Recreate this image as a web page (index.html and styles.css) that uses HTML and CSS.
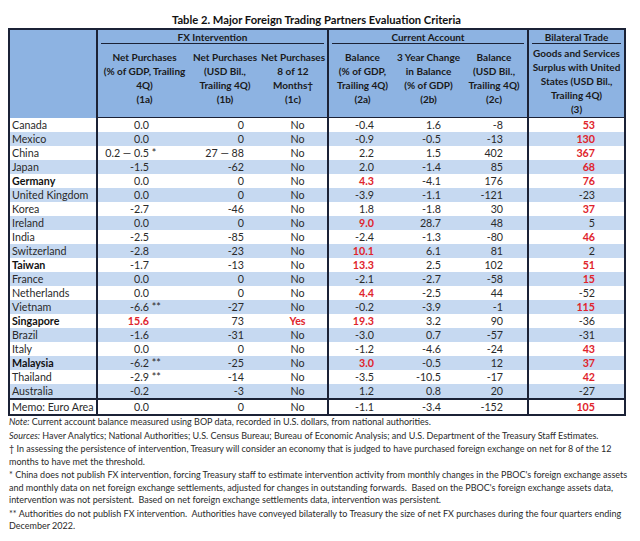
FILE: index.html
```html
<!DOCTYPE html>
<html lang="en">
<head>
<meta charset="utf-8">
<title>Table 2</title>
<link rel="stylesheet" href="styles.css">
</head>
<body>
<div class="page">
  <h1 class="title">Table 2. Major Foreign Trading Partners Evaluation Criteria</h1>
  <table class="crit">
    <colgroup>
      <col class="w0"><col class="w1a"><col class="w1b"><col class="w1c"><col class="w2a"><col class="w2b"><col class="w2c"><col class="w3">
    </colgroup>
    <thead>
      <tr class="grp">
        <th rowspan="2" class="sep"></th>
        <th colspan="3" class="sep"><div class="gl">FX Intervention</div></th>
        <th colspan="3" class="sep"><div class="gl">Current Account</div></th>
        <th><div class="gl">Bilateral Trade</div></th>
      </tr>
      <tr class="sub">
        <th>Net Purchases<br>(% of GDP, Trailing<br>4Q)<br>(1a)</th>
        <th>Net Purchases<br>(USD Bil.,<br>Trailing 4Q)<br>(1b)</th>
        <th class="sep">Net Purchases<br>8 of 12<br>Months†<br>(1c)</th>
        <th>Balance<br>(% of GDP,<br>Trailing 4Q)<br>(2a)</th>
        <th>3 Year Change<br>in Balance<br>(% of GDP)<br>(2b)</th>
        <th class="sep">Balance<br>(USD Bil.,<br>Trailing 4Q)<br>(2c)</th>
        <th class="tall">Goods and Services<br>Surplus with United<br>States (USD Bil.,<br>Trailing 4Q)<br>(3)</th>
      </tr>
    </thead>
    <tbody>
      <tr><td class="n">Canada</td><td class="a">0.0</td><td class="b">0</td><td class="c">No</td><td class="d">-0.4</td><td class="e">1.6</td><td class="f">-8</td><td class="g r">53</td></tr>
      <tr><td class="n">Mexico</td><td class="a">0.0</td><td class="b">0</td><td class="c">No</td><td class="d">-0.9</td><td class="e">-0.5</td><td class="f">-13</td><td class="g r">130</td></tr>
      <tr><td class="n">China</td><td class="a">0.2 — 0.5<span class="fn">&nbsp;*</span></td><td class="b">27 — 88</td><td class="c">No</td><td class="d">2.2</td><td class="e">1.5</td><td class="f">402</td><td class="g r">367</td></tr>
      <tr><td class="n">Japan</td><td class="a">-1.5</td><td class="b">-62</td><td class="c">No</td><td class="d">2.0</td><td class="e">-1.4</td><td class="f">85</td><td class="g r">68</td></tr>
      <tr><td class="n bold">Germany</td><td class="a">0.0</td><td class="b">0</td><td class="c">No</td><td class="d r">4.3</td><td class="e">-4.1</td><td class="f">176</td><td class="g r">76</td></tr>
      <tr><td class="n">United Kingdom</td><td class="a">0.0</td><td class="b">0</td><td class="c">No</td><td class="d">-3.9</td><td class="e">-1.1</td><td class="f">-121</td><td class="g">-23</td></tr>
      <tr><td class="n">Korea</td><td class="a">-2.7</td><td class="b">-46</td><td class="c">No</td><td class="d">1.8</td><td class="e">-1.8</td><td class="f">30</td><td class="g r">37</td></tr>
      <tr><td class="n">Ireland</td><td class="a">0.0</td><td class="b">0</td><td class="c">No</td><td class="d r">9.0</td><td class="e">28.7</td><td class="f">48</td><td class="g">5</td></tr>
      <tr><td class="n">India</td><td class="a">-2.5</td><td class="b">-85</td><td class="c">No</td><td class="d">-2.4</td><td class="e">-1.3</td><td class="f">-80</td><td class="g r">46</td></tr>
      <tr><td class="n">Switzerland</td><td class="a">-2.8</td><td class="b">-23</td><td class="c">No</td><td class="d r">10.1</td><td class="e">6.1</td><td class="f">81</td><td class="g">2</td></tr>
      <tr><td class="n bold">Taiwan</td><td class="a">-1.7</td><td class="b">-13</td><td class="c">No</td><td class="d r">13.3</td><td class="e">2.5</td><td class="f">102</td><td class="g r">51</td></tr>
      <tr><td class="n">France</td><td class="a">0.0</td><td class="b">0</td><td class="c">No</td><td class="d">-2.1</td><td class="e">-2.7</td><td class="f">-58</td><td class="g r">15</td></tr>
      <tr><td class="n">Netherlands</td><td class="a">0.0</td><td class="b">0</td><td class="c">No</td><td class="d r">4.4</td><td class="e">-2.5</td><td class="f">44</td><td class="g">-52</td></tr>
      <tr><td class="n">Vietnam</td><td class="a">-6.6<span class="fn">&nbsp;**</span></td><td class="b">-27</td><td class="c">No</td><td class="d">-0.2</td><td class="e">-3.9</td><td class="f">-1</td><td class="g r">115</td></tr>
      <tr><td class="n bold">Singapore</td><td class="a r">15.6</td><td class="b">73</td><td class="c r">Yes</td><td class="d r">19.3</td><td class="e">3.2</td><td class="f">90</td><td class="g">-36</td></tr>
      <tr><td class="n">Brazil</td><td class="a">-1.6</td><td class="b">-31</td><td class="c">No</td><td class="d">-3.0</td><td class="e">0.7</td><td class="f">-57</td><td class="g">-31</td></tr>
      <tr><td class="n">Italy</td><td class="a">0.0</td><td class="b">0</td><td class="c">No</td><td class="d">-1.2</td><td class="e">-4.6</td><td class="f">-24</td><td class="g r">43</td></tr>
      <tr><td class="n bold">Malaysia</td><td class="a">-6.2<span class="fn">&nbsp;**</span></td><td class="b">-25</td><td class="c">No</td><td class="d r">3.0</td><td class="e">-0.5</td><td class="f">12</td><td class="g r">37</td></tr>
      <tr><td class="n">Thailand</td><td class="a">-2.9<span class="fn">&nbsp;**</span></td><td class="b">-14</td><td class="c">No</td><td class="d">-3.5</td><td class="e">-10.5</td><td class="f">-17</td><td class="g r">42</td></tr>
      <tr><td class="n">Australia</td><td class="a">-0.2</td><td class="b">-3</td><td class="c">No</td><td class="d">1.2</td><td class="e">0.8</td><td class="f">20</td><td class="g">-27</td></tr>
      <tr class="memo"><td class="n">Memo: Euro Area</td><td class="a">0.0</td><td class="b">0</td><td class="c">No</td><td class="d">-1.1</td><td class="e">-3.4</td><td class="f">-152</td><td class="g r">105</td></tr>
    </tbody>
  </table>
  <div class="notes">
    <p><i>Note:</i> Current account balance measured using BOP data, recorded in U.S. dollars, from national authorities.</p>
    <p><i>Sources:</i> Haver Analytics; National Authorities; U.S. Census Bureau; Bureau of Economic Analysis; and U.S. Department of the Treasury Staff Estimates.</p>
    <p>† In assessing the persistence of intervention, Treasury will consider an economy that is judged to have purchased foreign exchange on net for 8 of the 12<br>months to have met the threshold.</p>
    <p>* China does not publish FX intervention, forcing Treasury staff to estimate intervention activity from monthly changes in the PBOC's foreign exchange assets<br>and monthly data on net foreign exchange settlements, adjusted for changes in outstanding forwards.&nbsp; Based on the PBOC's foreign exchange assets data,<br>intervention was not persistent.&nbsp; Based on net foreign exchange settlements data, intervention was persistent.</p>
    <p>** Authorities do not publish FX intervention.&nbsp; Authorities have conveyed bilaterally to Treasury the size of net FX purchases during the four quarters ending<br>December 2022.</p>
  </div>
</div>
</body>
</html>
```

FILE: styles.css
```css
html, body {
  margin: 0;
  padding: 0;
  background: #ffffff;
}
body {
  font-family: Lato, "Open Sans", "Liberation Sans", sans-serif;
  color: #222222;
}
.page {
  width: 640px;
  padding: 12px 0 0 8px;
  box-sizing: border-box;
}
.title {
  margin: 0;
  width: 617px;
  text-align: center;
  font-size: 11.2px;
  line-height: 15px;
  font-weight: 700;
  color: #111111;
}
.crit {
  margin-top: 1px;
  width: 617px;
  table-layout: fixed;
  border-collapse: collapse;
  border: 2px solid #1b2236;
  font-size: 10.7px;
}
.w0 { width: 88px; }
.w1a { width: 94px; }
.w1b { width: 68px; }
.w1c { width: 69px; }
.w2a { width: 68px; }
.w2b { width: 65px; }
.w2c { width: 67px; }
.w3 { width: 97px; }

.crit th {
  background: #8db3e2;
  font-weight: 700;
  color: #1a1a1a;
  padding: 0;
  text-align: center;
  white-space: nowrap;
}
.grp th {
  height: 14px;
  vertical-align: top;
  font-size: 10px;
}
.gl {
  margin: 0 3px;
  line-height: 12px;
  padding-top: 1px;
  border-bottom: 1.5px solid #1b2236;
}
.sub th {
  font-size: 10px;
  line-height: 14px;
  vertical-align: top;
  padding: 6px 0 1px;
  border-bottom: 1.5px solid #1b2236;
}
.sub th.tall {
  padding-top: 2px;
}
.crit .sep {
  border-right: 2px solid #1b2236;
}
.crit td {
  padding: 0;
  height: 14px;
  line-height: 14px;
  white-space: nowrap;
  color: #2a2a2a;
}
.crit tbody tr:nth-child(even) td {
  background: #c6d9f1;
}
.n {
  padding-left: 2px !important;
  border-right: 2px solid #1b2236;
}
.bold { font-weight: 700; color: #111111 !important; }
.a { text-align: right; padding-right: 42px !important; }
.b { text-align: right; padding-right: 15px !important; }
.c { text-align: center; padding-left: 9px !important; border-right: 2px solid #1b2236; }
.d { text-align: right; padding-right: 22px !important; }
.e { text-align: right; padding-right: 20px !important; }
.f { text-align: right; padding-right: 24px !important; border-right: 2px solid #1b2236; }
.g { text-align: right; padding-right: 29px !important; }
.crit td.r {
  color: #e0242c;
  font-weight: 700;
}
.fn {
  display: inline-block;
  width: 0;
  white-space: nowrap;
  text-align: left;
}
.memo td {
  border-top: 2px solid #1b2236;
  border-bottom: 2px solid #1b2236;
}
.notes {
  width: 632px;
  padding-left: 1px;
  font-size: 9px;
  line-height: 12.5px;
  color: #2a2a2a;
}
.notes p {
  margin: 0 0 1px 0;
  white-space: nowrap;
}
```
